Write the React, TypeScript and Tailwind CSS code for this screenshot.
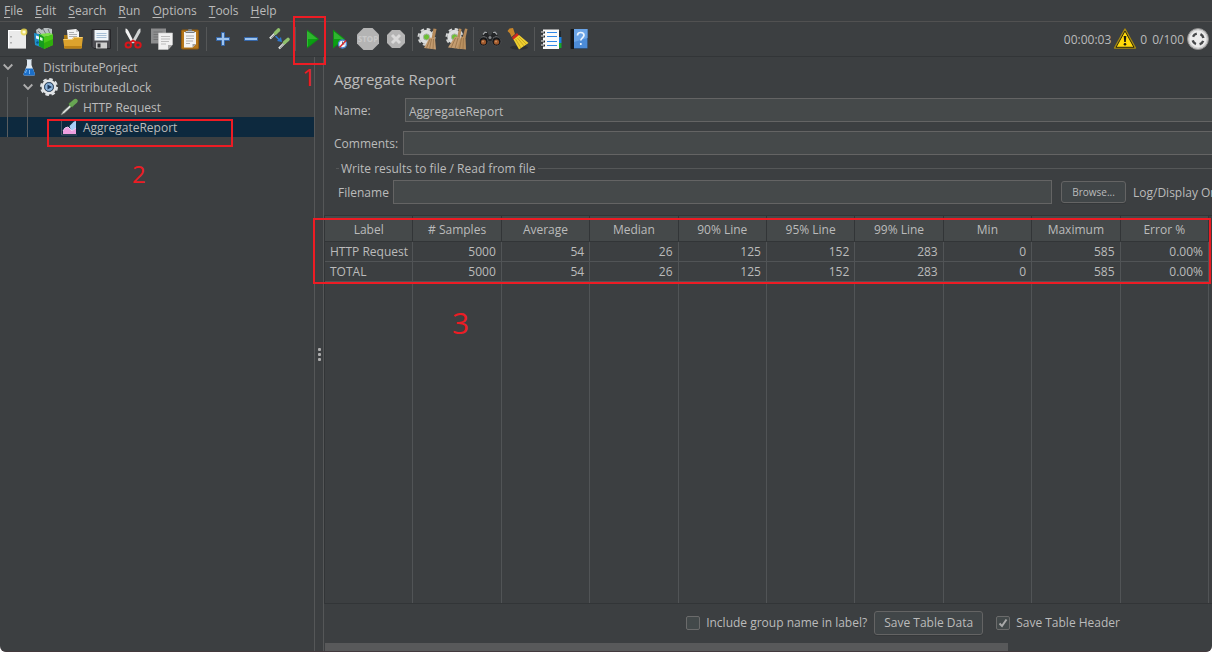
import React, { useState } from 'react';

interface SampleRow {
  label: string;
  values: string[];
}

const MENUS = ['File', 'Edit', 'Search', 'Run', 'Options', 'Tools', 'Help'];

const COLUMNS = [
  'Label',
  '# Samples',
  'Average',
  'Median',
  '90% Line',
  '95% Line',
  '99% Line',
  'Min',
  'Maximum',
  'Error %',
];

const ROWS: SampleRow[] = [
  { label: 'HTTP Request', values: ['5000', '54', '26', '125', '152', '283', '0', '585', '0.00%'] },
  { label: 'TOTAL', values: ['5000', '54', '26', '125', '152', '283', '0', '585', '0.00%'] },
];

const Icon: React.FC<{ children: React.ReactNode }> = ({ children }) => (
  <svg viewBox="0 0 24 24" className="h-6 w-6 shrink-0" aria-hidden="true">
    {children}
  </svg>
);

const NewIcon = () => (
  <Icon>
    <rect x="3" y="3" width="18" height="18" fill="#eaeaea" />
    <path d="M3.5 21V3.500H18" fill="none" stroke="#fff" />
    <path d="M3 21.500h18" stroke="#a5a5a5" />
    <path d="M6 9v1.5M6 15v1.5" stroke="#999" strokeWidth="1.4" />
    <circle cx="19" cy="5" r="3.4" fill="#e8d64e" opacity=".85" />
    <circle cx="19" cy="5" r="1.6" fill="#fffbd6" />
  </Icon>
);

const TemplatesIcon = () => (
  <Icon>
    <path d="M3 3l3-2 3 2 2-2h4l4 1v7H4z" fill="#b9bfc1" />
    <path d="M5 4l4 4M10 2l3 5M15 2l2 5" stroke="#737b7e" />
    <path d="M1 6l9 2v13l-8-3z" fill="#1f8fc9" />
    <path d="M3 8.5l3 1v3l-3-1z" fill="#e9f5fb" />
    <circle cx="4.5" cy="15.5" r="1.2" fill="#0a5788" />
    <path d="M6 7l5 2v13l-5-3z" fill="#159c1f" />
    <path d="M11 10l9-3v11l-9 4z" fill="#48c817" />
    <path d="M11 10l9-3-4-1-9 1z" fill="#7be048" />
    <path d="M7 10l2.5 1v3L7 13z" fill="#dff7df" />
    <path d="M11 16l9-4v6l-9 4z" fill="#2fae0c" />
  </Icon>
);

const OpenIcon = () => (
  <Icon>
    <path d="M3 8h7l1 2h10v11H3z" fill="#a9780f" />
    <path d="M6 3l9-1 3 3v9H7z" fill="#f3f3f3" />
    <path d="M15 2v3h3z" fill="#c9c9c9" />
    <path d="M8 5.5h5M8 7.5h8M8 9.5h8" stroke="#9d9d9d" strokeWidth=".8" />
    <path d="M2 12h9l2-2h9l-1.500 11.500H3.5z" fill="#dca32d" />
    <path d="M2.5 12.500H11.500l2-2h8" stroke="#f6cf74" fill="none" />
    <path d="M3.2 19h17.500l-.4 2.500H3.5z" fill="#bb8218" />
  </Icon>
);

const SaveIcon = () => (
  <Icon>
    <path d="M3 2.5h18.500v19H5L3 19.500z" fill="#4d4d52" stroke="#27272a" />
    <rect x="5.5" y="3" width="14" height="10.5" fill="#f0f5fa" />
    <path d="M7.5 6.5h10M7.5 8.5h10M7.5 10.5h10" stroke="#a7bfd6" />
    <rect x="7" y="15.5" width="11" height="6" fill="#d0d0d0" />
    <rect x="8.5" y="16.5" width="3" height="4" fill="#2f2f33" />
  </Icon>
);

const CutIcon = () => (
  <Icon>
    <path d="M3.500 1.500c1.500 0 3 2 4 4.500l4.500 9-2 1.500L3.500 5z" fill="#f2f2f2" />
    <path d="M18.500 1.500c-1.500 0-3 2-4 4.500L9.500 15l2.500 1.500L18.500 5z" fill="#cfd2d2" />
    <ellipse cx="6.3" cy="18" rx="2.7" ry="2.5" fill="none" stroke="#d9141a" strokeWidth="2" />
    <ellipse cx="16" cy="18" rx="2.7" ry="2.5" fill="none" stroke="#d9141a" strokeWidth="2" />
    <path d="M8 15.500l3-2 3.500 2" fill="none" stroke="#d9141a" strokeWidth="1.8" />
  </Icon>
);

const CopyIcon = () => (
  <Icon>
    <path d="M1 1.500h15v15H1z" fill="#8c8d8e" />
    <path d="M3.5 5h9M3.5 7.500h5M3.5 10h5M3.5 12.500h5" stroke="#727374" />
    <path d="M8.500 6h14v11.500L18 22.500H8.500z" fill="#f0f0f0" stroke="#c9c9c9" strokeWidth=".6" />
    <path d="M11 9.500h9M11 12h9M11 14.500h8M11 17h5" stroke="#bcbcbc" />
    <path d="M18 22.500v-4.500h4.500z" fill="#a8a8a8" />
  </Icon>
);

const PasteIcon = () => (
  <Icon>
    <rect x="3.5" y="3" width="17" height="19" rx="1" fill="#b5761a" stroke="#8f5a0f" />
    <path d="M6 5h12v12l-3.500 3.500H6z" fill="#f4f4f4" />
    <path d="M8 9h8M8 11.500h8M8 14h7M8 16.500h4" stroke="#b0b0b0" />
    <path d="M14.500 20.500V17H18z" fill="#9f9f9f" />
    <path d="M7.500 6V4h2.200l.8-2h3l.8 2h2.200v2z" fill="#777c80" />
    <path d="M8 4.500h8" stroke="#c6cacd" />
  </Icon>
);

const PlusIcon = () => (
  <Icon>
    <path d="M10.500 5.500h3v5h5v3h-5v5h-3v-5h-5v-3h5z" fill="#9cc3ee" stroke="#3566a8" />
  </Icon>
);

const MinusIcon = () => (
  <Icon>
    <path d="M5.500 10.500h13v3h-13z" fill="#9cc3ee" stroke="#3566a8" />
  </Icon>
);

const ToggleIcon = () => (
  <Icon>
    <path d="M3 11.500L9.500 5" stroke="#e2e5e2" strokeWidth="2.400" />
    <path d="M4 11L9 6" stroke="#5a5f5a" strokeWidth=".6" />
    <path d="M8.500 6L11.500 3" stroke="#8fc06c" strokeWidth="3.600" strokeLinecap="round" />
    <path d="M12 21.500l6-6" stroke="#e2e5e2" strokeWidth="2.400" />
    <path d="M13 21l4-4.500" stroke="#5a5f5a" strokeWidth=".6" />
    <path d="M17.500 15.500l3.500-3" stroke="#8fc06c" strokeWidth="3.600" strokeLinecap="round" />
    <path d="M8.500 9l4 4" stroke="#2f77d0" strokeWidth="1.6" />
    <path d="M15 15l-5-1L14 10z" fill="#2f77d0" />
  </Icon>
);

const StartIcon = () => (
  <Icon>
    <path d="M7 2.500L19 12 7 21.500z" fill="#0f8f14" />
    <path d="M8 4.500L17.500 12H8z" fill="#2fb52f" />
    <path d="M8 12h9.500L8 19.500z" fill="#0aa012" />
    <path d="M7.500 4.500v15" stroke="#3fce3f" opacity=".7" />
  </Icon>
);

const StartNoPausesIcon = () => (
  <Icon>
    <path d="M5 2.500L17 12 5 21.500z" fill="#0f8f14" />
    <path d="M6 4.500L15.500 12H6z" fill="#2fb52f" />
    <path d="M6 12h9.500L6 19.500z" fill="#0aa012" />
    <circle cx="14.5" cy="17" r="4" fill="#f2f6fb" stroke="#4a86cf" strokeWidth="1.4" />
    <path d="M14.500 14.500V17h2" fill="none" stroke="#56708f" />
    <path d="M11.500 20.500l6.500-7" stroke="#dc2626" strokeWidth="1.4" />
  </Icon>
);

const StopIcon = () => (
  <Icon>
    <path d="M7.500 1h9L23 7.500v9L16.500 23h-9L1 16.500v-9z" fill="#b4b4b4" />
    <text x="12" y="15" textAnchor="middle" fontSize="8" fontWeight="700" fill="#cacaca">
      STOP
    </text>
  </Icon>
);

const ShutdownIcon = () => (
  <Icon>
    <path d="M8 3h8l5 5v8l-5 5H8l-5-5V8z" fill="#b4b4b4" />
    <path d="M8 8l8 8M16 8l-8 8" stroke="#dadada" strokeWidth="3" />
  </Icon>
);

const Gear = () => (
  <>
    <circle cx="9.5" cy="10" r="8" fill="none" stroke="#d4d6d6" strokeWidth="2" strokeDasharray="3.6 2.683" />
    <circle cx="9.5" cy="10" r="7.2" fill="#dcdede" />
    <circle cx="9.5" cy="10" r="3.1" fill="#6cc035" stroke="#a9b0aa" />
  </>
);

const ClearIcon = () => (
  <Icon>
    <Gear />
    <path d="M16.500 1.500l3 .5-2 10h-3z" fill="#b58a5a" />
    <path d="M12.500 10.500l5.500 1 1 11L7 21z" fill="#c49c70" />
    <path d="M13 12L9.500 21M14.500 12l-2 10M16.500 12l-.5 10" stroke="#967148" strokeWidth=".8" />
  </Icon>
);

const ClearAllIcon = () => (
  <Icon>
    <Gear />
    <path d="M14 1.500l2.500.5-1.500 9h-3z" fill="#b58a5a" />
    <path d="M20 1.500l2.500.5-2 9h-3z" fill="#b58a5a" />
    <path d="M10 9.500l5 1 1 11.500L3 20.500z" fill="#c49c70" />
    <path d="M16 9.500l4.500 1 .5 12-9-1z" fill="#b9905f" />
    <path d="M10.500 11L6 21M13 11l-3 10.500M16.500 11l-2 11M18.500 11l-.5 11" stroke="#967148" strokeWidth=".8" />
  </Icon>
);

const SearchIcon = () => (
  <Icon>
    <path d="M4 9l2.500-4L9 4.500l2 4h2l2-4 2.500.5L20 9l3 5H1z" fill="#232527" />
    <path d="M5 7.500l2-2.300 2 .3M15 5.500l2-.3 2 2.300" fill="none" stroke="#a1a4a7" strokeWidth="1.2" />
    <path d="M3 10.500l3-1 3 1.500M15 11l3-1.500 3 1" fill="none" stroke="#6b6e71" />
    <circle cx="5.500" cy="14.500" r="4.500" fill="#17181a" stroke="#4f5254" strokeWidth=".8" />
    <circle cx="18.500" cy="14.500" r="4.500" fill="#17181a" stroke="#4f5254" strokeWidth=".8" />
    <circle cx="5.500" cy="15" r="2.600" fill="#a0592c" />
    <circle cx="18.500" cy="15" r="2.600" fill="#a0592c" />
    <circle cx="5" cy="14.500" r="1" fill="#cf9061" />
    <circle cx="18" cy="14.500" r="1" fill="#cf9061" />
    <circle cx="12" cy="10.500" r="1.500" fill="#85888b" />
  </Icon>
);

const BroomIcon = () => (
  <Icon>
    <ellipse cx="13" cy="20.500" rx="9" ry="2" fill="#2e3032" />
    <path d="M1.500 4l2-2.500L7 1l2 6-3.500 3-1.500-3.500z" fill="#c8862a" />
    <path d="M6 10.500L11 6l2 2.500-5.500 4.500z" fill="#d32a1c" />
    <path d="M7.500 12.500L13 8l9.500 8-9.500 6.500z" fill="#efcf2f" />
    <path d="M9.500 12l5.500 9M11.500 11l6.500 8M13 10l7 7" stroke="#b8961a" strokeWidth=".7" />
  </Icon>
);

const FunctionIcon = () => (
  <Icon>
    <path d="M19 4h3v6h-3z" fill="#222a30" />
    <path d="M19 10h3.500v6H19z" fill="#1b7fe0" />
    <path d="M19 16h3.500v5H19z" fill="#15a62c" />
    <rect x="4" y="2.500" width="16" height="19.500" fill="#fafafa" />
    <path d="M8 5.500h10M8 9.500h10M8 14.500h10M8 18.500h10" stroke="#2f87e6" strokeWidth="1.2" />
    <path d="M2 5.500h4M2 9.500h4M2 14.500h4M2 18.500h4" stroke="#27292b" strokeWidth="2.2" />
    <path d="M2 5h3M2 9h3M2 14h3M2 18h3" stroke="#f1f1f1" />
  </Icon>
);

const HelpIcon = () => (
  <Icon>
    <rect x="3.5" y="2" width="17" height="20" rx="1" fill="#15181b" />
    <rect x="7" y="2" width="13.5" height="19.5" fill="#4c8cd8" />
    <path d="M7 2h13.500v9L7 15z" fill="#6ba4e6" />
    <path
      d="M10.500 8.500c0-2 1.300-3 3.200-3s3.300 1 3.300 2.800c0 2.400-3.200 2.600-3.200 5.200M13.800 16v2"
      fill="none"
      stroke="#eaf3fd"
      strokeWidth="1.7"
    />
  </Icon>
);

const WarningIcon = () => (
  <Icon>
    <path d="M12 2L22.500 21h-21z" fill="#c9a60c" stroke="#a78a10" strokeWidth="1.400" strokeLinejoin="round" />
    <path d="M12 4L21 20.300H3z" fill="#ffd90a" stroke="#2b2710" strokeWidth="1" />
    <path d="M10.700 9h2.600l-.5 6h-1.600z" fill="#1d1b10" />
    <circle cx="12" cy="17.2" r="1.3" fill="#1d1b10" />
  </Icon>
);

const RemoteIcon = () => (
  <Icon>
    <circle cx="12" cy="12" r="10.5" fill="#cfcfcf" stroke="#8b8b8b" />
    <circle cx="12" cy="12" r="8.5" fill="#ececec" />
    <circle
      cx="12"
      cy="12"
      r="5.5"
      fill="none"
      stroke="#46484a"
      strokeWidth="2.4"
      strokeDasharray="4.8 3.839"
      strokeDashoffset="-1.92"
    />
  </Icon>
);

const TreeIcon: React.FC<{ children: React.ReactNode }> = ({ children }) => (
  <svg viewBox="0 0 18 18" className="mr-[5px] h-[18px] w-[18px] shrink-0" aria-hidden="true">
    {children}
  </svg>
);

const FlaskIcon = () => (
  <TreeIcon>
    <path d="M7 1h4.500v6l3.500 9q.3 1.500-1.500 1.500h-8.500Q3.200 17.500 3.500 16L7 7z" fill="#dfe8f0" />
    <path d="M5.800 10.500h7l2.200 5.500q.3 1.500-1.500 1.500h-8.500Q3.200 17.500 3.500 16z" fill="#1c6fc8" />
    <path d="M6.500 12l-1 3M9.500 12v4" stroke="#7db8f2" />
    <path d="M6.500 1.500h5.500" stroke="#9aa5ae" />
  </TreeIcon>
);

const ThreadGroupIcon = () => (
  <TreeIcon>
    <circle cx="9" cy="9" r="8" fill="none" stroke="#dfe2e5" strokeWidth="2" strokeDasharray="3.6 2.683" />
    <circle cx="9" cy="9" r="6.2" fill="none" stroke="#e4e6e8" strokeWidth="2.6" />
    <circle cx="9" cy="9" r="4.4" fill="#8eb4da" stroke="#35506e" />
    <path d="M7.500 6.500L12 9l-4.500 2.500z" fill="#203a5b" />
  </TreeIcon>
);

const SamplerIcon = () => (
  <TreeIcon>
    <path d="M1 17l2-3.500 7-6.500 1.500 1.500-7 6.500z" fill="#e3e7e3" stroke="#77807a" strokeWidth=".7" />
    <path d="M9 5l4 4" stroke="#3d6e2d" strokeWidth="2" />
    <path d="M11.500 6.500l4-3.500" stroke="#68a653" strokeWidth="4.400" strokeLinecap="round" />
  </TreeIcon>
);

const ReportIcon = () => (
  <TreeIcon>
    <path d="M1.500 2v15H17" fill="none" stroke="#56616c" strokeWidth=".8" />
    <path d="M9.500 8l4.500-4.500 2-.5v9l-5 1z" fill="#a9d0f7" />
    <path d="M3 13l2-3 3-1 2 2 2 2 4-3v6H3z" fill="#ee9fe0" />
    <path d="M3 13l2-3 3-1 2 2 2 2 4-3" fill="none" stroke="#f6cdf0" />
  </TreeIcon>
);

const TOOLBAR = [
  [
    { name: 'New', icon: <NewIcon /> },
    { name: 'Templates', icon: <TemplatesIcon /> },
    { name: 'Open', icon: <OpenIcon /> },
    { name: 'Save', icon: <SaveIcon /> },
  ],
  [
    { name: 'Cut', icon: <CutIcon /> },
    { name: 'Copy', icon: <CopyIcon /> },
    { name: 'Paste', icon: <PasteIcon /> },
  ],
  [
    { name: 'Expand All', icon: <PlusIcon /> },
    { name: 'Collapse All', icon: <MinusIcon /> },
    { name: 'Toggle', icon: <ToggleIcon /> },
  ],
  [
    { name: 'Start', icon: <StartIcon /> },
    { name: 'Start no pauses', icon: <StartNoPausesIcon /> },
    { name: 'Stop', icon: <StopIcon /> },
    { name: 'Shutdown', icon: <ShutdownIcon /> },
  ],
  [
    { name: 'Clear', icon: <ClearIcon /> },
    { name: 'Clear All', icon: <ClearAllIcon /> },
  ],
  [
    { name: 'Search', icon: <SearchIcon /> },
    { name: 'Reset Search', icon: <BroomIcon /> },
  ],
  [
    { name: 'Function Helper', icon: <FunctionIcon /> },
    { name: 'Help', icon: <HelpIcon /> },
  ],
];

const MenuBar = () => (
  <nav className="flex h-[22px] shrink-0 items-center gap-3 border-b border-[#515151] pl-1">
    {MENUS.map((menu) => (
      <button key={menu} type="button">
        <span className="underline underline-offset-2">{menu[0]}</span>
        {menu.slice(1)}
      </button>
    ))}
  </nav>
);

const Toolbar = () => (
  <div className="flex h-[35px] shrink-0 items-center border-b border-[#323537] pr-[2px] pl-[3px]">
    {TOOLBAR.map((group, i) => (
      <React.Fragment key={group[0].name}>
        {i > 0 && <span className="mx-[2px] h-6 w-px bg-[#555758]" />}
        {group.map(({ name, icon }) => (
          <button key={name} type="button" aria-label={name} className="flex h-7 w-7 items-center justify-center">
            {icon}
          </button>
        ))}
      </React.Fragment>
    ))}
    <div className="ml-auto flex items-center">
      <span className="mr-[2px] pt-[2px]">00:00:03</span>
      <button type="button" aria-label="Show log" className="mr-[5px] flex items-center gap-[3px]">
        <WarningIcon />
        <span className="pt-[2px]">0</span>
      </button>
      <span className="mr-[2px] pt-[2px]">0/100</span>
      <RemoteIcon />
    </div>
  </div>
);

const TreeRow: React.FC<{
  label: string;
  depth: number;
  icon: React.ReactNode;
  expanded?: boolean;
  selected?: boolean;
  onSelect: () => void;
}> = ({ label, depth, icon, expanded, selected, onSelect }) => (
  <button
    type="button"
    role="treeitem"
    aria-level={depth + 1}
    aria-selected={selected}
    onClick={onSelect}
    className={`flex h-5 w-full items-center ${selected ? 'bg-[#0d293e]' : ''}`}
  >
    {Array.from({ length: depth }, (_, i) => (
      <span key={i} className="ml-[7px] h-full w-[13px] border-l border-[#5a5d5f]" />
    ))}
    <span className="flex w-5 shrink-0 pl-[3px]">
      {expanded && (
        <svg viewBox="0 0 10 8" className="h-2 w-[10px]" aria-hidden="true">
          <path d="M.7 1.500L5 5.800l4.300-4.300" fill="none" stroke="#adadad" strokeWidth="1.9" />
        </svg>
      )}
    </span>
    {icon}
    <span className="pt-[2px]">{label}</span>
  </button>
);

const TestTree = () => {
  const [selected, setSelected] = useState('AggregateReport');

  return (
    <aside role="tree" className="w-[314px] shrink-0">
      <TreeRow
        label="DistributePorject"
        depth={0}
        icon={<FlaskIcon />}
        expanded
        selected={selected === 'DistributePorject'}
        onSelect={() => setSelected('DistributePorject')}
      />
      <TreeRow
        label="DistributedLock"
        depth={1}
        icon={<ThreadGroupIcon />}
        expanded
        selected={selected === 'DistributedLock'}
        onSelect={() => setSelected('DistributedLock')}
      />
      <TreeRow
        label="HTTP Request"
        depth={2}
        icon={<SamplerIcon />}
        selected={selected === 'HTTP Request'}
        onSelect={() => setSelected('HTTP Request')}
      />
      <TreeRow
        label="AggregateReport"
        depth={2}
        icon={<ReportIcon />}
        selected={selected === 'AggregateReport'}
        onSelect={() => setSelected('AggregateReport')}
      />
    </aside>
  );
};

const ResultsTable = () => (
  <table className="h-full w-full table-fixed border-separate border-spacing-0">
    <thead>
      <tr className="h-[26px] bg-[#45494a]">
        {COLUMNS.map((column) => (
          <th key={column} className="border-r border-b border-[#323537] p-0 pt-[2px] font-normal">
            {column}
          </th>
        ))}
      </tr>
    </thead>
    <tbody>
      {ROWS.map((row) => (
        <tr key={row.label} className="h-5">
          <td className="border-r border-b border-[#515456] p-0 pl-[5px]">{row.label}</td>
          {row.values.map((value, i) => (
            <td key={COLUMNS[i + 1]} className="border-r border-b border-[#515456] p-0 pr-[5px] text-right">
              {value}
            </td>
          ))}
        </tr>
      ))}
      <tr aria-hidden="true">
        {COLUMNS.map((column) => (
          <td key={column} className="border-r border-[#515456] p-0" />
        ))}
      </tr>
    </tbody>
  </table>
);

const CheckField: React.FC<{ id: string; label: string; defaultChecked?: boolean }> = ({ id, label, defaultChecked }) => (
  <div className="flex items-center gap-[6px]">
    <span className="relative flex">
      <input
        id={id}
        type="checkbox"
        defaultChecked={defaultChecked}
        className="peer h-[14px] w-[14px] appearance-none rounded-[2px] border border-[#6b6b6b] bg-[#43494a]"
      />
      <svg
        viewBox="0 0 14 14"
        className="pointer-events-none absolute inset-0 hidden h-[14px] w-[14px] peer-checked:block"
        aria-hidden="true"
      >
        <path d="M3.500 7.500l2.500 2.500L10.500 3.500" fill="none" stroke="#a9a9a9" strokeWidth="2" />
      </svg>
    </span>
    <label htmlFor={id}>{label}</label>
  </div>
);

const ReportPanel = () => {
  const [name, setName] = useState('AggregateReport');
  const [comments, setComments] = useState('');
  const [filename, setFilename] = useState('');

  return (
    <main className="flex min-w-0 flex-1 flex-col overflow-hidden">
      <h1 className="mt-3 ml-[10px] text-[15px] leading-5">Aggregate Report</h1>

      <div className="mt-[9px] ml-[10px] flex items-center">
        <label htmlFor="name" className="w-[71px] shrink-0 pt-[2px]">
          Name:
        </label>
        <input
          id="name"
          value={name}
          onChange={(e) => setName(e.target.value)}
          className="h-6 min-w-0 flex-1 border border-r-0 border-[#646464] bg-[#45494a] px-[3px] pt-[2px] outline-none"
        />
      </div>
      <div className="mt-[9px] ml-[10px] flex items-center">
        <label htmlFor="comments" className="w-[69px] shrink-0 pt-[2px]">
          Comments:
        </label>
        <input
          id="comments"
          value={comments}
          onChange={(e) => setComments(e.target.value)}
          className="h-6 min-w-0 flex-1 border border-r-0 border-[#646464] bg-[#45494a] px-[3px] pt-[2px] outline-none"
        />
      </div>

      <fieldset className="mt-1 ml-3 min-w-0 border-t border-[#555758]">
        <legend className="ml-[3px] px-[2px] pt-[2px] leading-4">Write results to file / Read from file</legend>
        <div className="mt-[3px] ml-[2px] flex items-center">
          <label htmlFor="filename" className="w-[55px] shrink-0 pt-[2px]">
            Filename
          </label>
          <input
            id="filename"
            value={filename}
            onChange={(e) => setFilename(e.target.value)}
            className="h-6 min-w-0 flex-1 border border-[#646464] bg-[#45494a] px-[3px] pt-[2px] outline-none"
          />
          <button
            type="button"
            className="ml-[9px] h-[22px] w-[65px] rounded-[3px] border border-[#646464] bg-[#414648] text-[10px] shadow-[0_1px_0_#35383a]"
          >
            Browse...
          </button>
          <span className="ml-[7px] w-[79px] shrink-0 overflow-hidden pt-[2px] whitespace-nowrap">Log/Display Only:</span>
        </div>
      </fieldset>

      <div className="mt-[11px] min-h-0 flex-1 border-y border-l border-[#323537] pr-[3px]">
        <ResultsTable />
      </div>

      <div className="flex h-[39px] shrink-0 items-center justify-end pr-[92px] pb-px">
        <CheckField id="group-name" label="Include group name in label?" />
        <button
          type="button"
          className="mr-[13px] ml-[7px] h-6 w-[109px] rounded-[3px] border border-[#646464] bg-[#414648] shadow-[0_1px_0_#35383a]"
        >
          Save Table Data
        </button>
        <CheckField id="table-header" label="Save Table Header" defaultChecked />
      </div>

      <div className="h-2 shrink-0 pl-px">
        <div className="h-full w-[77%] bg-[#58595a]" />
      </div>
    </main>
  );
};

const App: React.FC = () => (
  <div className="relative flex h-screen flex-col overflow-hidden rounded-b-md border-b border-[#43393d] bg-[#3c3f41] font-['Open_Sans','Noto_Sans',sans-serif] text-[12px] leading-4 text-[#bbbbbb]">
    <MenuBar />
    <Toolbar />
    <div className="flex min-h-0 flex-1">
      <TestTree />
      <div className="flex w-[10px] shrink-0 flex-col items-center justify-center gap-[2px] border-x border-[#555758]">
        <span className="h-[3px] w-[3px] rounded-[1px] bg-[#adadad]" />
        <span className="h-[3px] w-[3px] rounded-[1px] bg-[#adadad]" />
        <span className="h-[3px] w-[3px] rounded-[1px] bg-[#adadad]" />
      </div>
      <ReportPanel />
    </div>

    {/* Step markers drawn over the window */}
    <div className="pointer-events-none absolute top-4 left-[293px] h-[49px] w-[33px] border-2 border-[#ed1c24]" />
    <span className="absolute top-[65px] left-[302px] text-[24px] leading-6 text-[#ed1c24]">1</span>
    <div className="pointer-events-none absolute top-[119px] left-[47px] h-7 w-[186px] border-2 border-[#ed1c24]" />
    <span className="absolute top-[162px] left-[132px] text-[24px] leading-6 text-[#ed1c24]">2</span>
    <div className="pointer-events-none absolute top-[218px] right-px left-[313px] h-[66px] border-2 border-[#ed1c24]" />
    <span className="absolute top-[307px] left-[452px] text-[30px] leading-8 text-[#ed1c24]">3</span>
  </div>
);

export default App;
